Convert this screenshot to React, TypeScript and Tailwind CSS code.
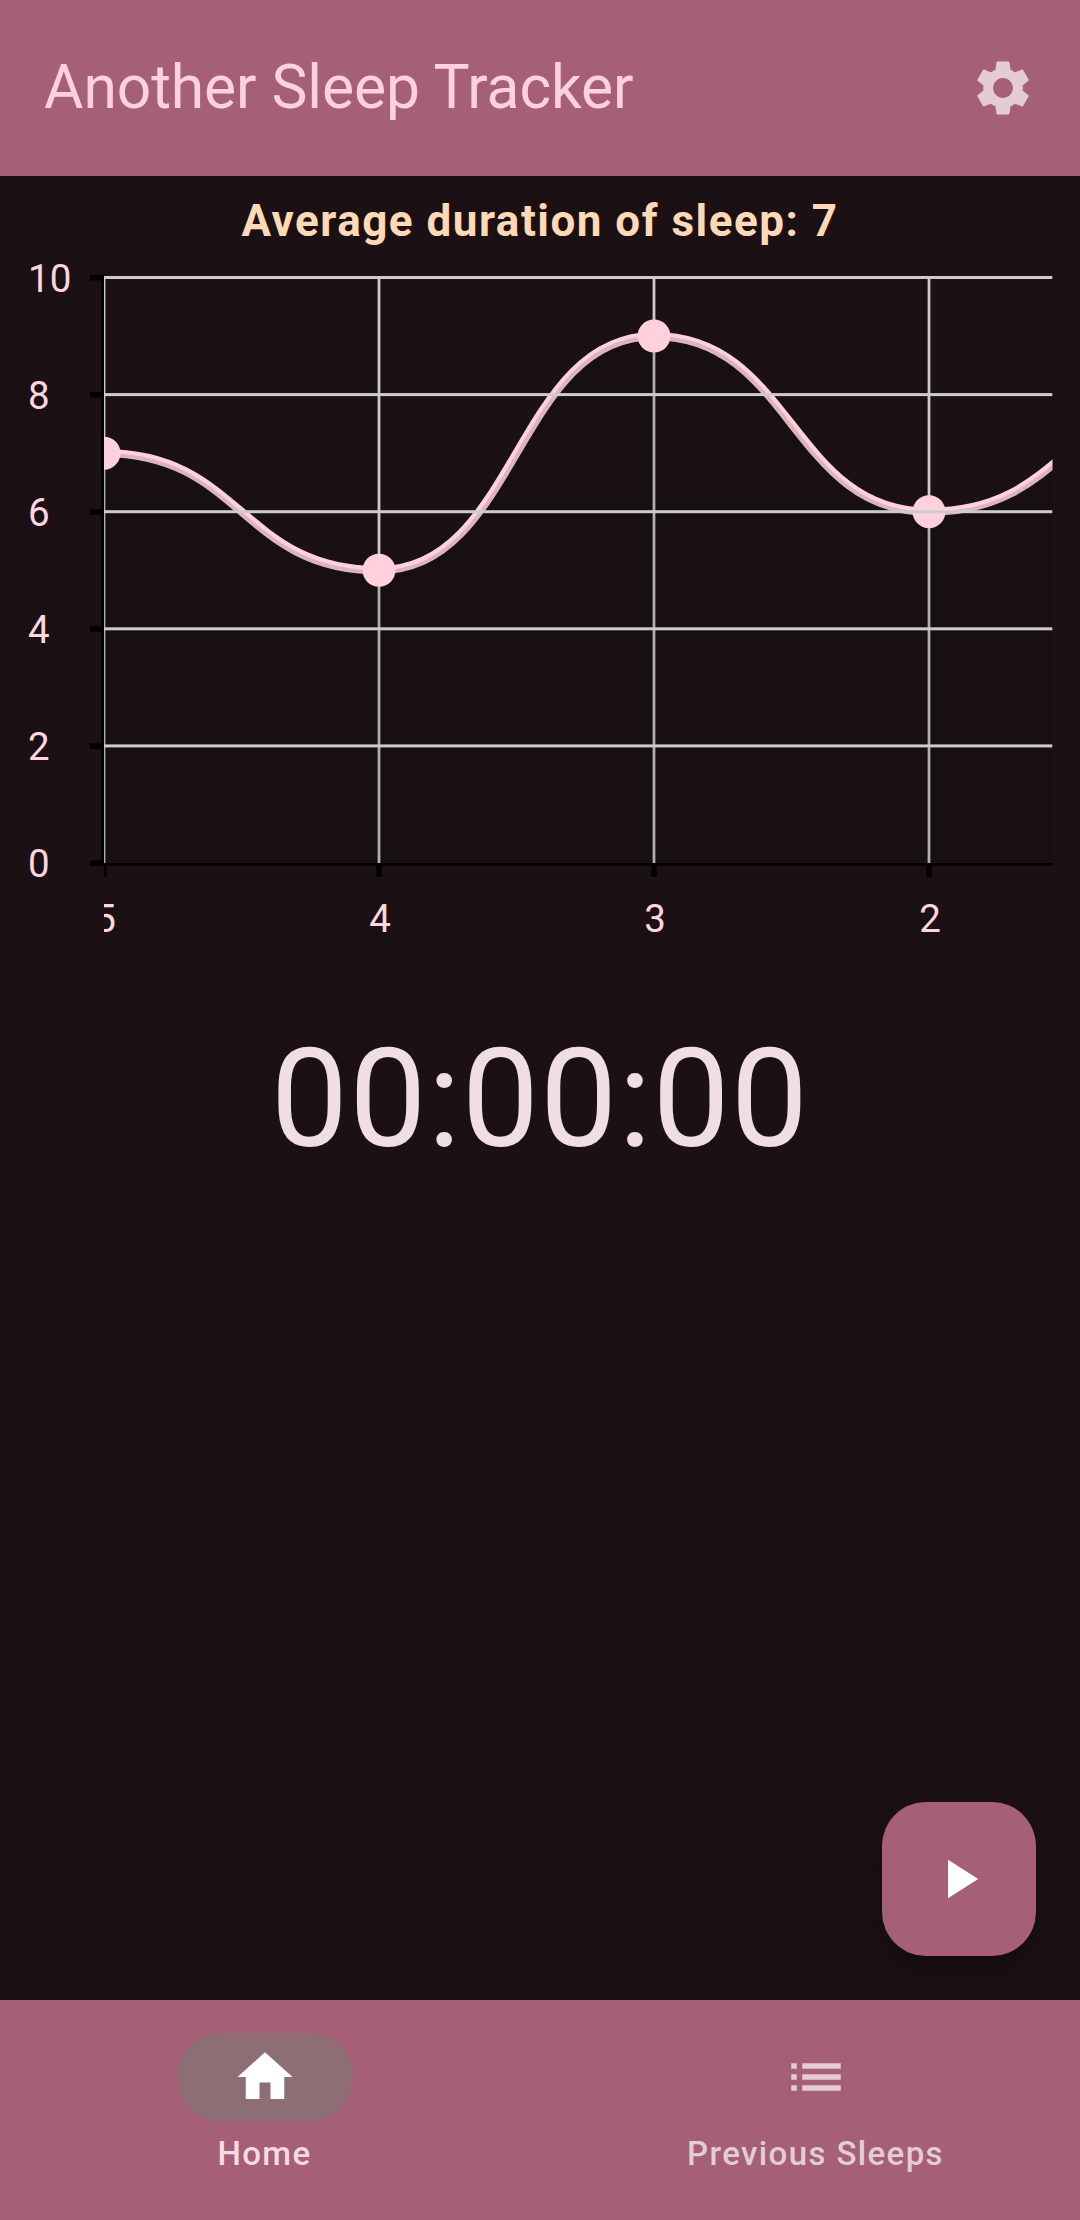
import { MdHome, MdList, MdPlayArrow, MdSettings } from "react-icons/md";

const LEFT = 104;
const RIGHT = 1052.5;
const BASE = 687;
const STEP_X = 275;
const UNIT_Y = 58.55;

const values = [7, 5, 9, 6, 8];
const days = ["5", "4", "3", "2"];
const ticks = [0, 2, 4, 6, 8, 10];

const px = (i: number) => LEFT + i * STEP_X;
const py = (v: number) => BASE - v * UNIT_Y;

const curve = values
  .map((v, i) => {
    if (i === 0) return `M${px(0)} ${py(v)}`;
    const mid = px(i) - STEP_X / 2;
    return `C${mid} ${py(values[i - 1])} ${mid} ${py(v)} ${px(i)} ${py(v)}`;
  })
  .join(" ");

function SleepChart() {
  return (
    <svg className="block h-[790px] w-[1080px]" viewBox="0 0 1080 790">
      <defs>
        <clipPath id="plot">
          <rect x={LEFT} y="0" width={RIGHT - LEFT} height="790" />
        </clipPath>
      </defs>
      <g clipPath="url(#plot)">
        {days.map((d, i) => (
          <rect key={d} x={px(i) - 1.375} y={py(10)} width="2.75" height={BASE - py(10)} fill="#cccccc" />
        ))}
        <path d={curve} fill="none" stroke="#ffd1dc" strokeWidth="8.25" />
        <path d={`${curve} V${BASE} H${LEFT} Z`} fill="#00080a" fillOpacity="0.14" />
        {values.map((v, i) => (
          <circle key={i} cx={px(i)} cy={py(v)} r="16.5" fill="#ffd1dc" />
        ))}
        {ticks.slice(1).map((t) => (
          <rect key={t} x={LEFT} y={py(t) - 1.5} width={RIGHT - LEFT} height="3" fill="#cccccc" />
        ))}
        <rect x={LEFT} y={BASE} width={RIGHT - LEFT} height="2.75" fill="#000000" />
        {days.map((d, i) => (
          <g key={d}>
            <rect x={px(i) - 2.75} y={BASE} width="5.5" height="13.75" fill="#000000" />
            <text x={px(i) + 1} y="755.5" textAnchor="middle" fontSize="38.5" fill="#ffd6df">
              {d}
            </text>
          </g>
        ))}
      </g>
      <rect x="101" y={py(10) - 2.75} width="3" height={BASE - py(10) + 5.5} fill="#000000" />
      {ticks.map((t) => (
        <g key={t}>
          <rect x="90" y={py(t) - 2.5} width="14" height="5.5" fill="#000000" />
          <text x="28" y={py(t) + 14.2} fontSize="38.5" fill="#ffd6df">
            {t}
          </text>
        </g>
      ))}
    </svg>
  );
}

export default function App() {
  return (
    <div className="flex h-[2220px] w-[1080px] flex-col overflow-hidden bg-[#1b1114] font-['Roboto',sans-serif]">
      <header className="flex h-[176px] shrink-0 items-center justify-between bg-[#a55f76] pr-11 pl-11">
        <h1 className="text-[60.5px] leading-none tracking-[-0.08px] whitespace-nowrap text-[#ffd1dc]">
          Another Sleep Tracker
        </h1>
        <MdSettings className="size-[66px] text-[#e3cdd3]" />
      </header>

      <main className="flex grow flex-col">
        <div className="grid">
          <h2 className="col-start-1 row-start-1 mt-[12px] text-center text-[44px] leading-[66px] font-bold tracking-[1.5px] text-[#ffd8b6]">
            Average duration of sleep: 7
          </h2>
          <div className="col-start-1 row-start-1">
            <SleepChart />
          </div>
        </div>
        <p className="mt-[53px] text-center text-[137.5px] leading-[160px] tracking-[1px] text-[#efdfe2]">
          00:00:00
        </p>
        <button className="mt-auto mr-11 mb-11 flex size-[154px] items-center justify-center self-end rounded-[44px] bg-[#a55f76] shadow-[0_14px_24px_rgba(0,0,0,0.3)]">
          <MdPlayArrow className="size-[66px] text-white" />
        </button>
      </main>

      <nav className="grid h-[220px] shrink-0 grid-cols-2 gap-[22px] bg-[#a55f76] pt-[33px] text-[33px] leading-[44px] font-medium tracking-[1.375px]">
        <div className="flex flex-col items-center gap-[11px] text-[#f3dbe1]">
          <div className="flex h-[88px] w-[176px] items-center justify-center rounded-full bg-[#8d6e75]">
            <MdHome className="size-[66px] text-white" />
          </div>
          <span>Home</span>
        </div>
        <div className="flex flex-col items-center gap-[11px] text-[#e3cdd3]">
          <div className="flex h-[88px] w-[176px] items-center justify-center">
            <MdList className="size-[66px]" />
          </div>
          <span>Previous Sleeps</span>
        </div>
      </nav>
    </div>
  );
}
